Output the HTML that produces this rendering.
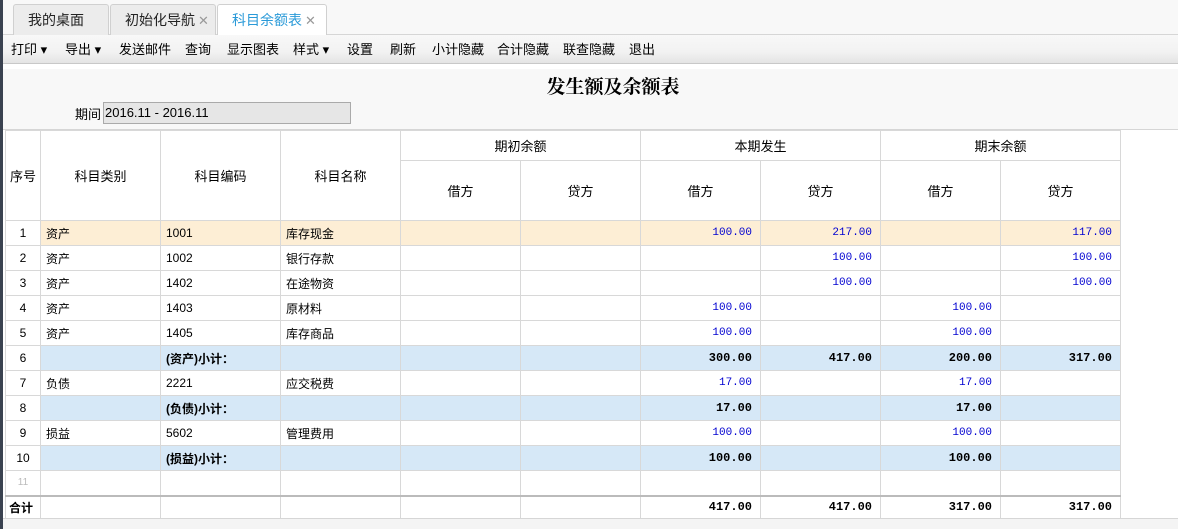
<!DOCTYPE html>
<html><head><meta charset="utf-8"><style>
*{margin:0;padding:0;box-sizing:border-box}
body{width:1178px;height:529px;overflow:hidden;background:#fff;font-family:"Liberation Sans","Noto Sans CJK SC",sans-serif;font-size:12px;color:#000;position:relative}
.lb{position:absolute;left:0;top:0;width:3px;height:529px;background:#3a4250}
.tabs{position:absolute;left:3px;top:0;right:0;height:35px;background:#f8f8f8;border-bottom:1px solid #d6d6d6}
.tab{position:absolute;top:4px;height:31px;border:1px solid #d0d0d0;border-bottom:none;border-radius:3px 3px 0 0;background:#ececec;font-size:14px;line-height:30px;padding-left:14px;color:#222}
.tab .x{color:#999;font-size:13px;margin-left:3px}
.tab.on{background:#fff;color:#2a9ad8;height:32px}
.tb{position:absolute;left:3px;top:35px;right:0;height:29px;background:linear-gradient(#f8f8f8,#f2f2f2 60%,#e4e4e4);border-bottom:1px solid #c8c8c8;font-size:13px;line-height:29px}
.tb span{position:absolute;top:0}
.content{position:absolute;left:3px;top:69px;right:0;height:61px;background:#f8f8f8;border-bottom:1px solid #d6d6d6}
.title{position:absolute;left:0;right:0;top:72px;text-align:center;font-size:19px;font-weight:bold;font-family:"Liberation Serif","Noto Serif CJK SC",serif;padding-left:48px}
.per{position:absolute;left:75px;top:104px;font-size:13px}
.inp{position:absolute;left:103px;top:102px;width:248px;height:22px;background:#e6e6e6;border:1px solid #aaa;font-size:13px;line-height:20px;padding-left:1px}
table{position:absolute;left:5px;top:130px;border-collapse:collapse;table-layout:fixed}
td{border:1px solid #d8d8d8;height:25px;padding:0 5px;font-size:12px;white-space:nowrap;overflow:hidden}
.h td{text-align:center;font-size:13px}
.c{text-align:center}
.r{text-align:right;font-family:"Liberation Mono",monospace;font-size:11px;padding-right:8px}
.b{color:#0000d0}
.s td{background:#d6e8f7}
.s .r,.t .r{font-weight:bold;color:#000;font-size:12px}
.sel td{background:#fdeed5}
.sel td:first-child{background:#fff}
.t td{border-top:2px solid #bbb;height:23px}
.bot{position:absolute;left:3px;top:518px;right:0;height:11px;background:#f4f4f4;border-top:1px solid #d6d6d6}
</style></head><body>
<div class="lb"></div>
<div class="tabs">
<div class="tab" style="left:10px;width:96px">我的桌面</div>
<div class="tab" style="left:107px;width:106px">初始化导航<span class="x">✕</span></div>
<div class="tab on" style="left:214px;width:110px">科目余额表<span class="x">✕</span></div>
</div>
<div class="tb">
<span style="left:8px">打印 ▾</span><span style="left:62px">导出 ▾</span><span style="left:116px">发送邮件</span><span style="left:182px">查询</span><span style="left:224px">显示图表</span><span style="left:290px">样式 ▾</span><span style="left:344px">设置</span><span style="left:387px">刷新</span><span style="left:429px">小计隐藏</span><span style="left:494px">合计隐藏</span><span style="left:560px">联查隐藏</span><span style="left:626px">退出</span>
</div>
<div class="content"></div>
<div class="title">发生额及余额表</div>
<div class="per">期间</div>
<div class="inp">2016.11 - 2016.11</div>
<table>
<colgroup><col style="width:35px"><col style="width:120px"><col style="width:120px"><col style="width:120px"><col style="width:120px"><col style="width:120px"><col style="width:120px"><col style="width:120px"><col style="width:120px"><col style="width:120px"></colgroup>
<tr class="h"><td rowspan="2" style="padding:0">序号</td><td rowspan="2">科目类别</td><td rowspan="2">科目编码</td><td rowspan="2">科目名称</td><td colspan="2" style="height:30px">期初余额</td><td colspan="2">本期发生</td><td colspan="2">期末余额</td></tr>
<tr class="h"><td style="height:60px">借方</td><td>贷方</td><td>借方</td><td>贷方</td><td>借方</td><td>贷方</td></tr>
<tr class="sel"><td class="c">1</td><td>资产</td><td>1001</td><td>库存现金</td><td></td><td></td><td class="r b">100.00</td><td class="r b">217.00</td><td></td><td class="r b">117.00</td></tr>
<tr><td class="c">2</td><td>资产</td><td>1002</td><td>银行存款</td><td></td><td></td><td></td><td class="r b">100.00</td><td></td><td class="r b">100.00</td></tr>
<tr><td class="c">3</td><td>资产</td><td>1402</td><td>在途物资</td><td></td><td></td><td></td><td class="r b">100.00</td><td></td><td class="r b">100.00</td></tr>
<tr><td class="c">4</td><td>资产</td><td>1403</td><td>原材料</td><td></td><td></td><td class="r b">100.00</td><td></td><td class="r b">100.00</td><td></td></tr>
<tr><td class="c">5</td><td>资产</td><td>1405</td><td>库存商品</td><td></td><td></td><td class="r b">100.00</td><td></td><td class="r b">100.00</td><td></td></tr>
<tr class="s"><td class="c" style="background:#fff">6</td><td></td><td style="font-weight:bold">(资产)小计：</td><td></td><td></td><td></td><td class="r">300.00</td><td class="r">417.00</td><td class="r">200.00</td><td class="r">317.00</td></tr>
<tr><td class="c">7</td><td>负债</td><td>2221</td><td>应交税费</td><td></td><td></td><td class="r b">17.00</td><td></td><td class="r b">17.00</td><td></td></tr>
<tr class="s"><td class="c" style="background:#fff">8</td><td></td><td style="font-weight:bold">(负债)小计：</td><td></td><td></td><td></td><td class="r">17.00</td><td></td><td class="r">17.00</td><td></td></tr>
<tr><td class="c">9</td><td>损益</td><td>5602</td><td>管理费用</td><td></td><td></td><td class="r b">100.00</td><td></td><td class="r b">100.00</td><td></td></tr>
<tr class="s"><td class="c" style="background:#fff">10</td><td></td><td style="font-weight:bold">(损益)小计：</td><td></td><td></td><td></td><td class="r">100.00</td><td></td><td class="r">100.00</td><td></td></tr>
<tr><td class="c" style="color:#bbb;font-size:10px">11</td><td></td><td></td><td></td><td></td><td></td><td></td><td></td><td></td><td></td></tr>
<tr class="t"><td style="font-weight:bold;padding:0 3px">合计</td><td></td><td></td><td></td><td></td><td></td><td class="r">417.00</td><td class="r">417.00</td><td class="r">317.00</td><td class="r">317.00</td></tr>
</table>
<div class="bot"></div>
</body></html>
